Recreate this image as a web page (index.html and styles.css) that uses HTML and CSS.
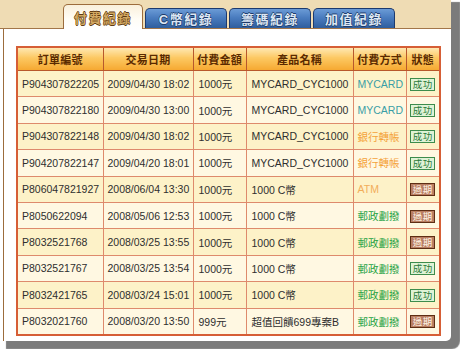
FILE: index.html
```html
<!DOCTYPE html>
<html lang="zh-Hant">
<head>
<meta charset="utf-8">
<title>付費紀錄</title>
<link rel="stylesheet" href="styles.css">
</head>
<body>
<div class="frame">
  <div class="tabstrip">
    <div class="tab tab-active">付費紀錄</div>
    <div class="tab tab-blue">C幣紀錄</div>
    <div class="tab tab-blue">籌碼紀錄</div>
    <div class="tab tab-blue">加值紀錄</div>
  </div>
  <div class="panel">
    <table class="records">
      <colgroup>
        <col class="c1"><col class="c2"><col class="c3"><col class="c4"><col class="c5"><col class="c6">
      </colgroup>
      <thead>
        <tr><th>訂單編號</th><th>交易日期</th><th>付費金額</th><th>產品名稱</th><th>付費方式</th><th>狀態</th></tr>
      </thead>
      <tbody>
        <tr><td>P904307822205</td><td>2009/04/30 18:02</td><td>1000元</td><td>MYCARD_CYC1000</td><td class="pm-mycard">MYCARD</td><td class="st"><span class="badge ok">成功</span></td></tr>
        <tr><td>P904307822180</td><td>2009/04/30 13:00</td><td>1000元</td><td>MYCARD_CYC1000</td><td class="pm-mycard">MYCARD</td><td class="st"><span class="badge ok">成功</span></td></tr>
        <tr><td>P904307822148</td><td>2009/04/30 18:02</td><td>1000元</td><td>MYCARD_CYC1000</td><td class="pm-bank">銀行轉帳</td><td class="st"><span class="badge ok">成功</span></td></tr>
        <tr><td>P904207822147</td><td>2009/04/20 18:01</td><td>1000元</td><td>MYCARD_CYC1000</td><td class="pm-bank">銀行轉帳</td><td class="st"><span class="badge ok">成功</span></td></tr>
        <tr><td>P806047821927</td><td>2008/06/04 13:30</td><td>1000元</td><td>1000 C幣</td><td class="pm-atm">ATM</td><td class="st"><span class="badge exp">過期</span></td></tr>
        <tr><td>P8050622094</td><td>2008/05/06 12:53</td><td>1000元</td><td>1000 C幣</td><td class="pm-post">郵政劃撥</td><td class="st"><span class="badge exp">過期</span></td></tr>
        <tr><td>P8032521768</td><td>2008/03/25 13:55</td><td>1000元</td><td>1000 C幣</td><td class="pm-post">郵政劃撥</td><td class="st"><span class="badge exp">過期</span></td></tr>
        <tr><td>P8032521767</td><td>2008/03/25 13:54</td><td>1000元</td><td>1000 C幣</td><td class="pm-post">郵政劃撥</td><td class="st"><span class="badge ok">成功</span></td></tr>
        <tr><td>P8032421765</td><td>2008/03/24 15:01</td><td>1000元</td><td>1000 C幣</td><td class="pm-post">郵政劃撥</td><td class="st"><span class="badge ok">成功</span></td></tr>
        <tr><td>P8032021760</td><td>2008/03/20 13:50</td><td>999元</td><td>超值回饋699專案B</td><td class="pm-post">郵政劃撥</td><td class="st"><span class="badge exp">過期</span></td></tr>
      </tbody>
    </table>
  </div>
</div>
</body>
</html>
```

FILE: styles.css
```css
html, body {
  margin: 0;
  padding: 0;
  background: #ffffff;
}
body {
  font-family: "Liberation Sans", "Noto Sans CJK TC", sans-serif;
  width: 460px;
  height: 349px;
  overflow: hidden;
}
.frame {
  margin-left: 3px;
  width: 448px;
  height: 341px;
  background: #ffffff;
  border-radius: 0 0 5px 0;
  box-shadow: 6px 5px 1px 3px #7b7b7b;
  display: flex;
  flex-direction: column;
}
.tabstrip {
  margin-left: -3px;
  height: 28px;
  background: #efdcb4;
  border-bottom: 1px solid #a2764a;
  display: flex;
  align-items: flex-end;
  padding-left: 63px;
  gap: 1px;
  flex: none;
}
.tab {
  box-sizing: border-box;
  display: flex;
  align-items: center;
  justify-content: center;
  font-weight: bold;
  font-size: 13px;
  letter-spacing: 1.5px;
  border-radius: 5px 5px 0 0;
}
.tab-active {
  width: 80px;
  height: 25px;
  margin-bottom: -1px;
  background: linear-gradient(#f9f0dc, #fffdf6 60%, #ffffff);
  border: 1px solid #9c6c3c;
  border-bottom: none;
  color: #d2a862;
  text-shadow: 0.6px 0 0 #5e3a12, -0.6px 0 0 #5e3a12, 0 0.6px 0 #5e3a12, 0 -0.6px 0 #5e3a12;
}
.tab-blue {
  width: 82px;
  height: 20px;
  background: linear-gradient(#6b9bd6, #4a7cbf 45%, #2f5e9e);
  border: 1px solid #1d3a6e;
  border-bottom: none;
  color: #dce7f4;
  text-shadow: 0.6px 0 0 #1f3b6a, -0.6px 0 0 #1f3b6a, 0 0.6px 0 #1f3b6a, 0 -0.6px 0 #1f3b6a;
  margin-left: 1px;
}
.tab-blue:first-of-type { margin-left: 0; }
.panel {
  flex: 1;
  border-left: 1px solid #9c6c3c;
  padding: 17px 0 0 12px;
}
.records {
  border-collapse: collapse;
  table-layout: fixed;
  width: 423px;
  border: 2px solid #d65e36;
}
.c1 { width: 86px; }
.c2 { width: 90px; }
.c3 { width: 53px; }
.c4 { width: 107px; }
.c5 { width: 53px; }
.c6 { width: 34px; }
.records th {
  height: 22px;
  padding: 0;
  font-size: 11px;
  font-weight: bold;
  letter-spacing: 0.3px;
  color: #5a2a00;
  background: linear-gradient(#fee8b2, #fcc862 45%, #f6a932);
  border: 1px solid #b8582c;
  text-align: center;
  white-space: nowrap;
}
.records td {
  height: 25.4px;
  padding: 0 0 0 4px;
  font-size: 10.5px;
  color: #2e2e2e;
  border: 1px solid #de8a6c;
  white-space: nowrap;
  overflow: hidden;
}
.records td:nth-child(3),
.records td:nth-child(4) { padding-left: 5px; }
.records tbody tr:nth-child(odd) td { background: #fdf2c8; }
.records tbody tr:nth-child(even) td { background: #fff8e2; }
.pm-mycard { color: #3a9ea6 !important; }
.pm-bank { color: #f4a23a !important; }
.pm-atm { color: #f2ad5a !important; }
.pm-post { color: #24a244 !important; }
.records td.st {
  padding: 0;
  text-align: center;
}
.badge {
  display: inline-block;
  box-sizing: border-box;
  width: 25px;
  height: 13px;
  line-height: 11px;
  font-size: 9.5px;
  letter-spacing: 0.5px;
  border: 1px solid;
  vertical-align: middle;
}
.badge.ok {
  background: #dff3d6;
  border-color: #3d8c4c;
  color: #2c7a3a;
}
.badge.exp {
  background: #b97e62;
  border-color: #5e2e14;
  color: #fff4e6;
}
```
